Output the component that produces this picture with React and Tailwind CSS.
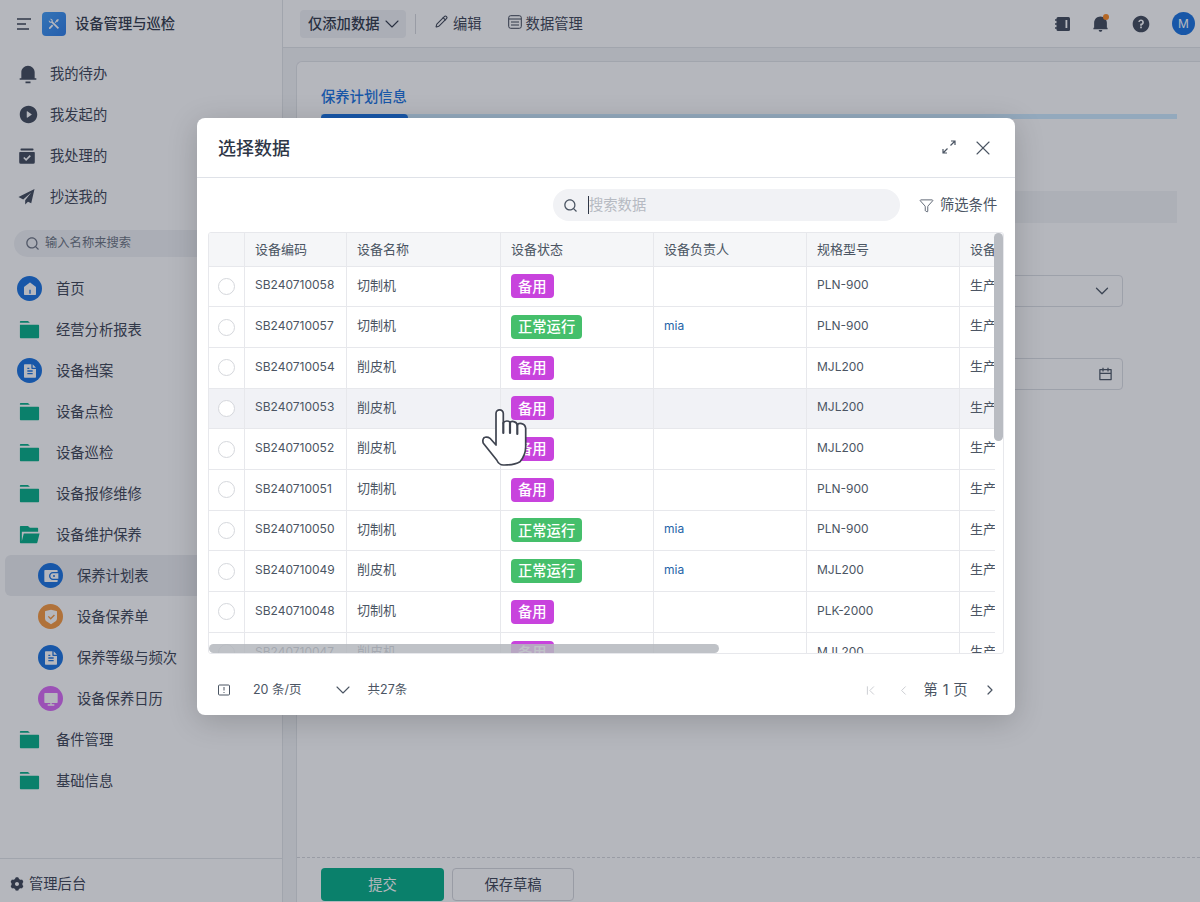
import {
  RiNotification3Fill, RiPlayCircleFill, RiSearchLine, RiHome5Fill,
  RiFolder3Fill, RiFolderOpenFill, RiFileTextFill, RiWallet3Fill, RiShieldCheckFill, RiComputerFill,
  RiSettings3Fill, RiQuestionFill, RiToolsFill, RiCalendarLine, RiNotification2Fill,
} from "react-icons/ri"
import { ChevronDown, ChevronFirst, ChevronLeft, ChevronRight, Filter, Pencil, X } from "lucide-react"

const font = { fontFamily: 'Inter, "Noto Sans CJK SC", sans-serif' }

const ArchiveCheck = ({ size }) => (
  <svg width={size} height={size} viewBox="0 0 18 18" fill="currentColor">
    <rect x="2.5" y="1.5" width="13" height="2" rx="0.8" />
    <path d="M2 5h14a.8.8 0 0 1 .8.8v9.4a1.6 1.6 0 0 1-1.6 1.6H2.8a1.6 1.6 0 0 1-1.6-1.6V5.800A.8.8 0 0 1 2 5Z" />
    <path d="m5.800 10.500 2.300 2.300 4.200-4.200" fill="none" stroke="#fff" strokeWidth="1.600" />
  </svg>
)

const PlaneIcon = ({ size }) => (
  <svg width={size} height={size} viewBox="0 0 18 18" fill="currentColor">
    <path d="M17.500 1 0.500 9.500l5 2.600L14 4.800 7.600 13v4.500l3-3 3.400 1.600Z" />
  </svg>
)

const topLinks = [
  { label: "我的待办", Icon: RiNotification3Fill, size: 20 },
  { label: "我发起的", Icon: RiPlayCircleFill, size: 21 },
  { label: "我处理的", Icon: ArchiveCheck, size: 18 },
  { label: "抄送我的", Icon: PlaneIcon, size: 17 },
]

const rows = [
  ["SB240710058", "切制机", "备用", "", "PLN-900"],
  ["SB240710057", "切制机", "正常运行", "mia", "PLN-900"],
  ["SB240710054", "削皮机", "备用", "", "MJL200"],
  ["SB240710053", "削皮机", "备用", "", "MJL200"],
  ["SB240710052", "削皮机", "备用", "", "MJL200"],
  ["SB240710051", "切制机", "备用", "", "PLN-900"],
  ["SB240710050", "切制机", "正常运行", "mia", "PLN-900"],
  ["SB240710049", "削皮机", "正常运行", "mia", "MJL200"],
  ["SB240710048", "切制机", "备用", "", "PLK-2000"],
  ["SB240710047", "削皮机", "备用", "", "MJL200"],
]

const Folder = ({ label, open }) => (
  <div className="h-[41px] flex items-center text-[14.3px] text-[#3b4252]">
    <span className="w-[56px] flex justify-center pl-[3px] text-[#00ad85]">
      {open ? <RiFolderOpenFill size={23} /> : <RiFolder3Fill size={23} />}
    </span>
    {label}
  </div>
)

const Round = ({ label, Icon, color, sub }) => (
  <div className={`h-[41px] flex items-center text-[14.3px] text-[#3b4252] ${sub ? "pl-[38px] gap-[14px]" : "pl-[17px] gap-[14px]"}`}>
    <span className={`w-[25px] h-[25px] rounded-full flex items-center justify-center text-white ${color}`}>
      <Icon size={16} />
    </span>
    {label}
  </div>
)

const Sidebar = () => (
  <aside className="w-[283px] shrink-0 h-full flex flex-col border-r border-[#e2e4e8] bg-white">
    <div className="h-[48px] flex items-center pl-[17px] shrink-0">
      <svg width="14" height="12" viewBox="0 0 14 12" className="text-[#3b4252]">
        <path d="M0 1h14M0 6h9M0 11h12" stroke="currentColor" strokeWidth="1.6" fill="none" />
      </svg>
      <span className="ml-[11px] w-[24px] h-[24px] rounded-[4px] bg-gradient-to-br from-[#3f9bf5] to-[#2a7be8] flex items-center justify-center text-white">
        <RiToolsFill size={14} />
      </span>
      <span className="ml-[9px] text-[14.3px] font-medium text-[#2f3747]">设备管理与巡检</span>
    </div>
    <div className="mt-[5px]">
      {topLinks.map(({ label, Icon, size }) => (
        <div key={label} className="h-[41px] flex items-center text-[14.3px] text-[#3b4252]">
          <span className="w-[50px] pl-[18px] text-[#3f4859]"><Icon size={size} /></span>
          {label}
        </div>
      ))}
    </div>
    <div className="mt-[13px] mx-[14px] h-[27px] rounded-full bg-[#f1f2f5] flex items-center pl-[11px] gap-[5px] text-[12.3px] text-[#6b7280] shrink-0">
      <RiSearchLine size={15} />
      输入名称来搜索
    </div>
    <div className="mt-[11px]">
      <Round label="首页" Icon={RiHome5Fill} color="bg-[#1671e0]" />
      <Folder label="经营分析报表" />
      <Round label="设备档案" Icon={RiFileTextFill} color="bg-[#1671e0]" />
      <Folder label="设备点检" />
      <Folder label="设备巡检" />
      <Folder label="设备报修维修" />
      <Folder label="设备维护保养" open />
      <div className="ml-[5px] rounded-l-[6px] bg-[#ecedf0] -mr-[1px]">
        <div className="-ml-[5px]">
          <Round label="保养计划表" Icon={RiWallet3Fill} color="bg-[#1671e0]" sub />
        </div>
      </div>
      <Round label="设备保养单" Icon={RiShieldCheckFill} color="bg-[#f8983c]" sub />
      <Round label="保养等级与频次" Icon={RiFileTextFill} color="bg-[#1671e0]" sub />
      <Round label="设备保养日历" Icon={RiComputerFill} color="bg-[#d868f5]" sub />
      <Folder label="备件管理" />
      <Folder label="基础信息" />
    </div>
    <div className="mt-auto h-[44px] border-t border-[#e2e4e8] flex items-center pl-[9px] pt-[6px] gap-[4px] text-[14.3px] text-[#3b4252] shrink-0">
      <RiSettings3Fill size={16} />
      管理后台
    </div>
  </aside>
)

const TopBar = () => (
  <header className="h-[48px] shrink-0 flex items-center pl-[17px] pr-[5px] border-b border-[#e2e4e8] bg-white text-[14.3px] text-[#3b4252]">
    <div className="w-[106px] h-[28px] rounded-[4px] bg-[#f1f2f5] flex items-center pl-[8px] gap-[1px] font-medium text-[#2f3747]">
      仅添加数据
      <ChevronDown size={24} strokeWidth={1.1} />
    </div>
    <span className="ml-[9px] w-px h-[20px] bg-[#d5d7dc]" />
    <Pencil size={13} className="ml-[19px] mb-[4px]" />
    <span className="ml-[5px]">编辑</span>
    <svg width="14" height="14" viewBox="0 0 14 14" className="ml-[26px] mb-[4px]" fill="none" stroke="currentColor">
      <rect x="0.7" y="0.7" width="12.6" height="12.6" rx="2" />
      <path d="M1 4h12M3 7h8M3 10h8" />
    </svg>
    <span className="ml-[4px]">数据管理</span>
    <div className="ml-auto flex items-center text-[#3f4859]">
      <svg width="16" height="16" viewBox="0 0 16 16">
        <rect x="1.500" y="1" width="13.500" height="14" rx="1.500" fill="currentColor" />
        <rect x="10.500" y="4" width="1.800" height="8" fill="#fff" />
        <path d="M0 4h3M0 8h3M0 12h3" stroke="currentColor" strokeWidth="1.400" />
      </svg>
      <span className="relative ml-[21px]">
        <RiNotification2Fill size={17} />
        <span className="absolute -top-[1px] right-0 w-[6px] h-[6px] rounded-full bg-[#ff8a1f]" />
      </span>
      <RiQuestionFill size={20} className="ml-[22px]" />
      <span className="ml-[21px] w-[23px] h-[23px] rounded-full bg-[#1671e0] flex items-center justify-center text-white text-[12px]">M</span>
    </div>
  </header>
)

const Page = () => (
  <div className="flex-1 min-w-0 flex flex-col">
    <TopBar />
    <div className="flex-1 min-h-0 bg-[#f4f5f7] pl-[13px] pt-[13px]">
      <div className="h-full bg-white rounded-tl-[6px] border-l border-t border-[#e2e4e8] flex flex-col">
        <div className="flex-1 min-h-0 pl-[24px] pr-[23px]">
          <div className="h-[57px] flex flex-col justify-end">
            <div className="text-[14.3px] font-medium text-[#1671e0] mb-[7px]">保养计划信息</div>
            <div className="h-[5px] bg-[#cdeaff]">
              <div className="w-[87px] h-full bg-[#1671e0] rounded-t-[4px]" />
            </div>
          </div>
          <div className="mt-[72px] h-[32px] bg-[#f4f5f7]" />
          <div className="mt-[52px] mr-[54px] h-[32px] border border-[#dcdee3] rounded-[4px] flex items-center justify-end pr-[9px] text-[#4b5563]">
            <ChevronDown size={22} strokeWidth={1.4} />
          </div>
          <div className="mt-[51px] mr-[54px] h-[32px] border border-[#dcdee3] rounded-[4px] flex items-center justify-end pr-[9px] text-[#4b5563]">
            <RiCalendarLine size={15} />
          </div>
        </div>
        <div className="h-[45px] shrink-0 border-t border-dashed border-[#d5d7dc] flex items-start pt-[10px] pl-[24px] gap-[8px] text-[14.3px]">
          <div className="w-[123px] h-[33px] rounded-[4px] bg-[#00ad85] text-white flex items-center justify-center">提交</div>
          <div className="w-[122px] h-[33px] rounded-[4px] border border-[#d5d7dc] text-[#3b4252] flex items-center justify-center">保存草稿</div>
        </div>
      </div>
    </div>
  </div>
)

const Tag = ({ text }) => (
  <span className={`inline-flex items-center h-[24px] px-[7px] rounded-[4px] text-[14.3px] font-medium text-white ${text === "备用" ? "bg-[#c843dd]" : "bg-[#45bf6b]"}`}>
    {text}
  </span>
)

const gridCols = "grid grid-cols-[36px_102px_154px_153px_153px_153px_153px]"
const cell = "border-r border-[#e7e8ec] px-[10px] flex items-center overflow-hidden whitespace-nowrap"

const DataTable = () => (
  <div className="relative ml-[11px] mr-[11px] mt-[11px] h-[422px] border border-[#e7e8ec] rounded-[3px] flex overflow-hidden">
    <div className="w-[786px] overflow-hidden">
      <div className="w-[904px]">
        <div className={`${gridCols} h-[33.5px] bg-[#f5f6f8] border-b border-[#e7e8ec] text-[13px] text-[#4b5563]`}>
          <div className={cell} />
          <div className={cell}>设备编码</div>
          <div className={cell}>设备名称</div>
          <div className={cell}>设备状态</div>
          <div className={cell}>设备负责人</div>
          <div className={cell}>规格型号</div>
          <div className={cell}>设备类型</div>
        </div>
        {rows.map((row, i) => (
          <div key={row[0]} className={`${gridCols} h-[40.7px] border-b border-[#e7e8ec] ${i === 3 ? "bg-[#f1f2f6]" : "bg-white"} text-[13px] text-[#4b5563]`}>
            <div className="border-r border-[#e7e8ec] flex items-center justify-center">
              <span className="shrink-0 w-[17px] h-[17px] rounded-full border border-[#d5d7dc] bg-white" />
            </div>
            <div className={`${cell} text-[12px] pb-[2px]`}>{row[0]}</div>
            <div className={`${cell} pb-[2px]`}>{row[1]}</div>
            <div className={cell}><Tag text={row[2]} /></div>
            <div className={`${cell} text-[12px] text-[#2563a8] pb-[2px]`}>{row[3]}</div>
            <div className={`${cell} text-[12px] pb-[2px]`}>{row[4]}</div>
            <div className={`${cell} pb-[2px]`}>生产</div>
          </div>
        ))}
      </div>
    </div>
    <div className="flex-1"><div className="h-[33.5px] bg-[#f5f6f8] border-b border-[#e7e8ec]" /></div>
    <div className="absolute right-0 top-0 w-[9px] h-[208px] rounded-full bg-[#b9bcc2]" />
    <div className="absolute left-0 bottom-0 w-[510px] h-[9px] rounded-full bg-[#b4b7bd]/85" />
  </div>
)

const Modal = () => (
  <div className="absolute left-[197px] top-[118px] w-[818px] h-[597px] rounded-[8px] bg-white shadow-[0_6px_30px_rgba(0,0,0,0.18)]">
    <div className="h-[60px] border-b border-[#dfe2e8] flex items-center pl-[21px] pr-[20px]">
      <span className="text-[18px] font-medium text-[#2f3747] mt-[2px]">选择数据</span>
      <svg width="14" height="14" viewBox="0 0 14 14" className="ml-auto mb-[2px] text-[#4b5563]" fill="none" stroke="currentColor" strokeWidth="1.200">
        <path d="M8.500 5.500 13 1M9 1h4v4M5.500 8.500 1 13M1 9v4h4" />
      </svg>
      <X size={24} strokeWidth={1.1} className="ml-[15px] text-[#4b5563]" />
    </div>
    <div className="h-[32px] mt-[11px] flex items-center pl-[356px]">
      <div className="w-[347px] shrink-0 h-[32px] rounded-full bg-[#f1f2f5] flex items-center pl-[10px] text-[14.3px] text-[#b6bac2]">
        <RiSearchLine size={15} className="text-[#4b5563]" />
        <span className="ml-[10px] w-px h-[18px] bg-[#2f3747]" />
        <span>搜索数据</span>
      </div>
      <Filter size={15} strokeWidth={1.4} className="ml-[19px] shrink-0 text-[#4b5563]" />
      <span className="ml-[6px] whitespace-nowrap text-[14.3px] text-[#4b5563]">筛选条件</span>
    </div>
    <DataTable />
    <div className="h-[60px] flex items-center pl-[21px] pr-[17px] pt-[12px] text-[12.5px] text-[#4b5563]">
      <svg width="12" height="12" viewBox="0 0 12 12" fill="none" stroke="currentColor">
        <rect x="0.500" y="1" width="11" height="10" rx="1" />
        <path d="M6 3v3.500M6 8v1" />
      </svg>
      <span className="ml-[23px]">20 条/页</span>
      <ChevronDown size={24} strokeWidth={1.1} className="ml-[29px]" />
      <span className="ml-[13px]">共27条</span>
      <ChevronFirst size={15} strokeWidth={1.4} className="ml-auto text-[#c3c6cc]" />
      <ChevronLeft size={15} strokeWidth={1.4} className="ml-[18px] text-[#c3c6cc]" />
      <span className="ml-[13px] text-[14.3px] tracking-[0.4px]">第 1 页</span>
      <ChevronRight size={16} strokeWidth={1.8} className="ml-[14px]" />
    </div>
  </div>
)

const HandCursor = () => (
  <svg width="50" height="64" viewBox="0 0 50 64" className="absolute left-[480px] top-[405px]">
    <path
      d="M16 8.500a3.650 3.650 0 0 1 7.300 0V18c1-2.600 6-2.600 6.700-.3 1-2 6.400-1.800 7.300 2.300 1.200-2.400 7.600-2.300 8.400 3.300v18.400c0 6-2.400 11-5.700 15-5 3-11.500 3.400-16.700 3.300-3 0-5.200-2-6.600-5L3.300 38.300c-1.200-3.400.4-6 1.700-6 2.200-.6 3.700 0 5 1L16 40Z"
      fill="#fff"
      stroke="#3f4450"
      strokeWidth="1.700"
      strokeLinejoin="round"
    />
    <path d="M23.300 18v10M30 18v10M37.300 20v9" stroke="#3f4450" strokeWidth="2.200" strokeLinecap="round" />
  </svg>
)

export default function App() {
  return (
    <div className="relative w-[1200px] h-[902px] overflow-hidden flex bg-white" style={font}>
      <Sidebar />
      <Page />
      <div className="absolute inset-0 bg-[#1d2538]/33" />
      <Modal />
      <HandCursor />
    </div>
  )
}
